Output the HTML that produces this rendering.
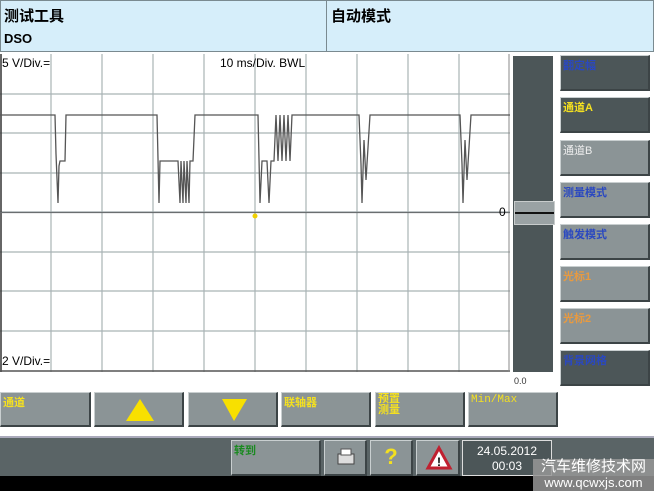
<!DOCTYPE html>
<html><head><meta charset="utf-8"><style>
*{margin:0;padding:0;box-sizing:border-box}
body{width:654px;height:491px;background:#fff;position:relative;overflow:hidden;font-family:"Liberation Sans","Noto Sans CJK SC",sans-serif}
.a{position:absolute}
.hdr{background:#d6eefa;border:1px solid #7a8a90}
.btn{position:absolute;background:#8b9496;border-top:1px solid #c9cfd0;border-left:1px solid #c9cfd0;border-right:2px solid #3c4446;border-bottom:2px solid #3c4446;font-size:11px;padding:1px 2px;font-weight:bold}
.dk{background:#4c5658}
</style></head><body>
<div class="a hdr" style="left:0;top:0;width:327px;height:52px"></div>
<div class="a hdr" style="left:326px;top:0;width:328px;height:52px"></div>
<div class="a" style="left:4px;top:5px;font-size:15px;font-weight:bold">测试工具</div>
<div class="a" style="left:4px;top:31px;font-size:13px;font-weight:bold">DSO</div>
<div class="a" style="left:331px;top:5px;font-size:15px;font-weight:bold">自动模式</div>
<svg class="a" style="left:0;top:54px" width="512" height="320">
<g stroke="#a9b3b5" stroke-width="1.2">
<line x1="51" y1="0" x2="51" y2="318"/><line x1="102" y1="0" x2="102" y2="318"/><line x1="153" y1="0" x2="153" y2="318"/><line x1="204" y1="0" x2="204" y2="318"/><line x1="255" y1="0" x2="255" y2="318"/><line x1="306" y1="0" x2="306" y2="318"/><line x1="357" y1="0" x2="357" y2="318"/><line x1="408" y1="0" x2="408" y2="318"/><line x1="459" y1="0" x2="459" y2="318"/>
<line x1="0" y1="40" x2="510" y2="40"/><line x1="0" y1="79" x2="510" y2="79"/><line x1="0" y1="119" x2="510" y2="119"/><line x1="0" y1="158" x2="510" y2="158"/><line x1="0" y1="198" x2="510" y2="198"/><line x1="0" y1="237" x2="510" y2="237"/><line x1="0" y1="277" x2="510" y2="277"/>
</g>
<line x1="1" y1="0" x2="1" y2="318" stroke="#333" stroke-width="1.5"/>
<line x1="0" y1="317" x2="510" y2="317" stroke="#555" stroke-width="1.5"/>
<line x1="509" y1="0" x2="509" y2="318" stroke="#888"/>
<polyline fill="none" stroke="#6a6e70" stroke-width="1.3" points="0,158.5 510,158.5"/>
<polyline fill="none" stroke="#555" stroke-width="1.3" points="0,61 55,61 56,100 58,149 59,112 60,107 65,107 66,61 157,61 159,149 160,107 178,107 180,149 181,107 183,149 184,107 186,149 187,107 189,149 190,107 193,107 195,61 258,61 260,149 262,107 267,107 269,149 271,107 274,107 276,61 278,107 280,61 282,107 284,61 286,107 288,61 290,107 292,61 359,61 361,110 362,149 364,86 366,126 370,61 460,61 462,110 463,149 465,86 467,126 471,61 510,61"/>
<circle cx="255" cy="162" r="2.5" fill="#f0d000"/>
</svg>
<div class="a" style="left:2px;top:56px;font-size:12px">5 V/Div.=</div>
<div class="a" style="left:220px;top:56px;font-size:12px">10 ms/Div. BWL</div>
<div class="a" style="left:2px;top:354px;font-size:12px">2 V/Div.=</div>
<div class="a" style="left:499px;top:205px;font-size:12px">0</div>
<div class="a dk" style="left:513px;top:56px;width:40px;height:316px"></div>
<div class="a" style="left:514px;top:201px;width:41px;height:24px;background:#9aa2a4;border:1px solid #c8cccc"><div style="margin-top:10px;height:2px;background:#111"></div></div>
<div class="a" style="left:514px;top:376px;font-size:9px;color:#333">0.0</div>
<div class="btn dk" style="left:560px;top:55px;width:90px;height:36px;color:#2a48c0">翻定幅</div>
<div class="btn dk" style="left:560px;top:97px;width:90px;height:36px;color:#f4e020">通道A</div>
<div class="btn" style="left:560px;top:140px;width:90px;height:36px;color:#eee;font-weight:normal">通道B</div>
<div class="btn" style="left:560px;top:182px;width:90px;height:36px;color:#2a48c0">测量模式</div>
<div class="btn" style="left:560px;top:224px;width:90px;height:36px;color:#2a48c0">触发模式</div>
<div class="btn" style="left:560px;top:266px;width:90px;height:36px;color:#e89a40">光标1</div>
<div class="btn" style="left:560px;top:308px;width:90px;height:36px;color:#e89a40">光标2</div>
<div class="btn dk" style="left:560px;top:350px;width:90px;height:36px;color:#2a48c0">背景网格</div>
<div class="btn" style="left:0;top:392px;width:91px;height:35px;color:#f4e020">通道</div>
<div class="btn" style="left:94px;top:392px;width:90px;height:35px"><svg width="86" height="30"><polygon points="43,5 29,27 57,27" fill="#f8e000"/></svg></div>
<div class="btn" style="left:188px;top:392px;width:90px;height:35px"><svg width="86" height="30"><polygon points="31,5 56,5 43,27" fill="#f8e000"/></svg></div>
<div class="btn" style="left:281px;top:392px;width:90px;height:35px;color:#f4e020">联轴器</div>
<div class="btn" style="left:375px;top:392px;width:90px;height:35px;color:#f4e020;line-height:11px">预置<br>测量</div>
<div class="btn" style="left:468px;top:392px;width:90px;height:35px;color:#f4e020;font-family:'Liberation Mono',monospace;font-weight:normal">Min/Max</div>
<div class="a" style="left:0;top:436px;width:654px;height:40px;background:#5a6466;border-top:2px solid #aab"></div>
<div class="a" style="left:0;top:476px;width:654px;height:15px;background:#000"></div>
<div class="btn" style="left:231px;top:440px;width:90px;height:36px;color:#1a8a20">转到</div>
<div class="btn" style="left:324px;top:440px;width:43px;height:36px"><svg width="38" height="32"><rect x="11" y="12" width="16" height="10" fill="#ddd" stroke="#444"/><rect x="14" y="7" width="10" height="6" fill="#fff" stroke="#555"/></svg></div>
<div class="btn" style="left:370px;top:440px;width:43px;height:36px;color:#f4e020;font-size:22px;text-align:center;line-height:30px">?</div>
<div class="btn" style="left:416px;top:440px;width:44px;height:36px"><svg width="40" height="32"><polygon points="20,6 9,26 31,26" fill="#fff" stroke="#c02030" stroke-width="3"/><text x="20" y="24" font-size="12" font-weight="bold" text-anchor="middle" fill="#000">!</text></svg></div>
<div class="a" style="left:462px;top:440px;width:90px;height:36px;background:#4c5658;border:1px solid #ddd;color:#fff;font-size:12px;text-align:center;line-height:15px;padding-top:3px">24.05.2012<br>00:03</div>
<div class="a" style="left:533px;top:459px;width:121px;height:32px;background:rgba(150,150,150,.85);color:#fff;text-align:center;font-size:15px;line-height:16px">汽车维修技术网<br><span style="font-size:13px">www.qcwxjs.com</span></div>
</body></html>
